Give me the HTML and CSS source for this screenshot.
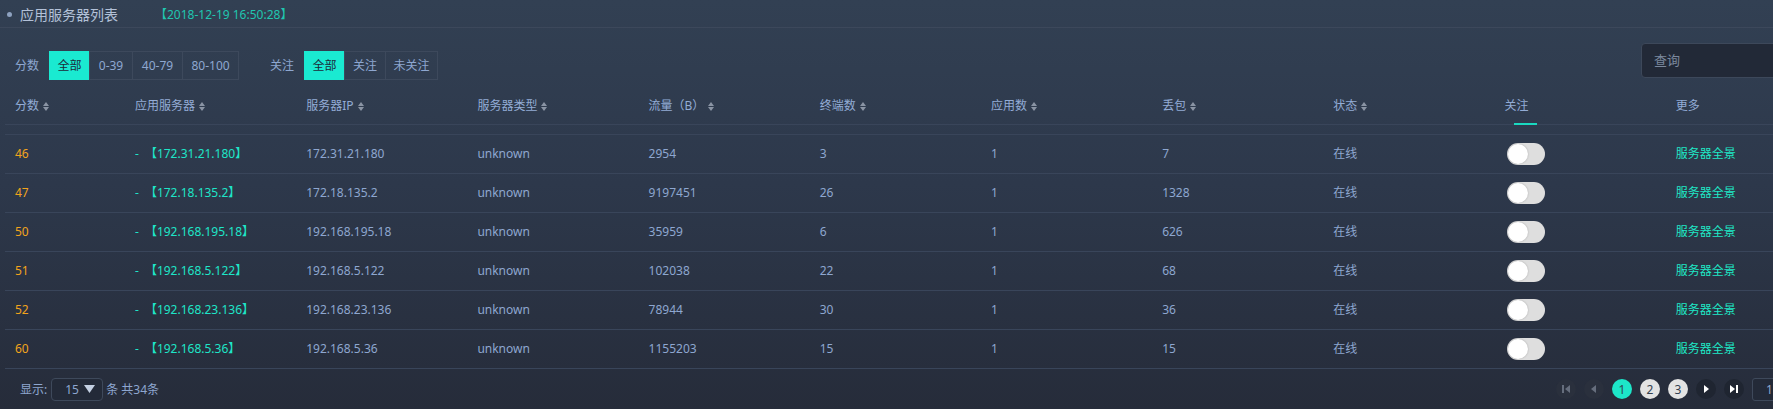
FILE: index.html
```html
<!DOCTYPE html>
<html lang="zh-CN">
<head>
<meta charset="utf-8">
<title>应用服务器列表</title>
<link rel="stylesheet" href="styles.css">
</head>
<body>
<div class="page">
  <div class="titlebar">
    <span class="dot"></span>
    <span class="title">应用服务器列表</span>
    <span class="stamp">【2018-12-19 16:50:28】</span>
  </div>

  <div class="toolbar">
    <div class="filter">
      <span class="flabel">分数</span>
      <div class="btn-group">
        <span class="btn active w40">全部</span>
        <span class="btn w43">0-39</span>
        <span class="btn w50">40-79</span>
        <span class="btn w57 last">80-100</span>
      </div>
    </div>
    <div class="filter second">
      <span class="flabel">关注</span>
      <div class="btn-group">
        <span class="btn active w40">全部</span>
        <span class="btn w41">关注</span>
        <span class="btn w53 last">未关注</span>
      </div>
    </div>
    <div class="search">查询</div>
  </div>

  <div class="grid">
    <div class="row head">
      <div class="cell">分数<svg class="sort" width="6" height="9" viewBox="0 0 6 9"><polygon points="0,4 3,0 6,4"/><polygon points="0,5 6,5 3,9"/></svg></div>
      <div class="cell">应用服务器<svg class="sort" width="6" height="9" viewBox="0 0 6 9"><polygon points="0,4 3,0 6,4"/><polygon points="0,5 6,5 3,9"/></svg></div>
      <div class="cell">服务器IP<svg class="sort" width="6" height="9" viewBox="0 0 6 9"><polygon points="0,4 3,0 6,4"/><polygon points="0,5 6,5 3,9"/></svg></div>
      <div class="cell">服务器类型<svg class="sort" width="6" height="9" viewBox="0 0 6 9"><polygon points="0,4 3,0 6,4"/><polygon points="0,5 6,5 3,9"/></svg></div>
      <div class="cell">流量（B）<svg class="sort" width="6" height="9" viewBox="0 0 6 9"><polygon points="0,4 3,0 6,4"/><polygon points="0,5 6,5 3,9"/></svg></div>
      <div class="cell">终端数<svg class="sort" width="6" height="9" viewBox="0 0 6 9"><polygon points="0,4 3,0 6,4"/><polygon points="0,5 6,5 3,9"/></svg></div>
      <div class="cell">应用数<svg class="sort" width="6" height="9" viewBox="0 0 6 9"><polygon points="0,4 3,0 6,4"/><polygon points="0,5 6,5 3,9"/></svg></div>
      <div class="cell">丢包<svg class="sort" width="6" height="9" viewBox="0 0 6 9"><polygon points="0,4 3,0 6,4"/><polygon points="0,5 6,5 3,9"/></svg></div>
      <div class="cell">状态<svg class="sort" width="6" height="9" viewBox="0 0 6 9"><polygon points="0,4 3,0 6,4"/><polygon points="0,5 6,5 3,9"/></svg></div>
      <div class="cell marked">关注</div>
      <div class="cell">更多</div>
    </div>
    <div class="spacer"></div>

    <div class="row">
      <div class="cell score">46</div>
      <div class="cell server"><span class="dash">-</span>【172.31.21.180】</div>
      <div class="cell">172.31.21.180</div>
      <div class="cell">unknown</div>
      <div class="cell">2954</div>
      <div class="cell">3</div>
      <div class="cell">1</div>
      <div class="cell">7</div>
      <div class="cell">在线</div>
      <div class="cell"><span class="toggle"><span class="knob"></span></span></div>
      <div class="cell link">服务器全景</div>
    </div>
    <div class="row">
      <div class="cell score">47</div>
      <div class="cell server"><span class="dash">-</span>【172.18.135.2】</div>
      <div class="cell">172.18.135.2</div>
      <div class="cell">unknown</div>
      <div class="cell">9197451</div>
      <div class="cell">26</div>
      <div class="cell">1</div>
      <div class="cell">1328</div>
      <div class="cell">在线</div>
      <div class="cell"><span class="toggle"><span class="knob"></span></span></div>
      <div class="cell link">服务器全景</div>
    </div>
    <div class="row">
      <div class="cell score">50</div>
      <div class="cell server"><span class="dash">-</span>【192.168.195.18】</div>
      <div class="cell">192.168.195.18</div>
      <div class="cell">unknown</div>
      <div class="cell">35959</div>
      <div class="cell">6</div>
      <div class="cell">1</div>
      <div class="cell">626</div>
      <div class="cell">在线</div>
      <div class="cell"><span class="toggle"><span class="knob"></span></span></div>
      <div class="cell link">服务器全景</div>
    </div>
    <div class="row">
      <div class="cell score">51</div>
      <div class="cell server"><span class="dash">-</span>【192.168.5.122】</div>
      <div class="cell">192.168.5.122</div>
      <div class="cell">unknown</div>
      <div class="cell">102038</div>
      <div class="cell">22</div>
      <div class="cell">1</div>
      <div class="cell">68</div>
      <div class="cell">在线</div>
      <div class="cell"><span class="toggle"><span class="knob"></span></span></div>
      <div class="cell link">服务器全景</div>
    </div>
    <div class="row">
      <div class="cell score">52</div>
      <div class="cell server"><span class="dash">-</span>【192.168.23.136】</div>
      <div class="cell">192.168.23.136</div>
      <div class="cell">unknown</div>
      <div class="cell">78944</div>
      <div class="cell">30</div>
      <div class="cell">1</div>
      <div class="cell">36</div>
      <div class="cell">在线</div>
      <div class="cell"><span class="toggle"><span class="knob"></span></span></div>
      <div class="cell link">服务器全景</div>
    </div>
    <div class="row">
      <div class="cell score">60</div>
      <div class="cell server"><span class="dash">-</span>【192.168.5.36】</div>
      <div class="cell">192.168.5.36</div>
      <div class="cell">unknown</div>
      <div class="cell">1155203</div>
      <div class="cell">15</div>
      <div class="cell">1</div>
      <div class="cell">15</div>
      <div class="cell">在线</div>
      <div class="cell"><span class="toggle"><span class="knob"></span></span></div>
      <div class="cell link">服务器全景</div>
    </div>
  </div>

  <div class="footer">
    <span class="show">显示:</span>
    <span class="select"><span class="sel-val">15</span><svg class="caret" width="11" height="8" viewBox="0 0 11 8"><polygon points="0,0 11,0 5.5,8"/></svg></span>
    <span class="total">条 共34条</span>
    <div class="pager">
      <span class="pg dim"><svg width="20" height="20" viewBox="0 0 20 20"><rect x="6" y="6" width="2" height="8"/><polygon points="14,6 14,14 9,10"/></svg></span>
      <span class="pg dim"><svg width="20" height="20" viewBox="0 0 20 20"><polygon points="12,6 12,14 7,10"/></svg></span>
      <span class="pg num cur">1</span>
      <span class="pg num">2</span>
      <span class="pg num">3</span>
      <span class="pg nav"><svg width="20" height="20" viewBox="0 0 20 20"><polygon points="8,6 8,14 13,10"/></svg></span>
      <span class="pg nav"><svg width="20" height="20" viewBox="0 0 20 20"><polygon points="6,6 6,14 11,10"/><rect x="12" y="6" width="2" height="8"/></svg></span>
      <span class="jump">1</span>
    </div>
  </div>
</div>
</body>
</html>
```
FILE: styles.css
```css
* { box-sizing: border-box; }
html, body { margin: 0; padding: 0; }
body {
  width: 1773px;
  height: 409px;
  overflow: hidden;
  background: linear-gradient(180deg, #324053 0%, #2d384b 45%, #262c3a 100%);
  font-family: "Noto Sans", "Noto Sans CJK SC", sans-serif;
  font-size: 12px;
  color: #8ea7d0;
}
.page { width: 1840px; }

/* title bar */
.titlebar {
  height: 28px;
  border-bottom: 1px solid #3c485b;
  display: flex;
  align-items: center;
  padding-left: 7px;
  padding-top: 2px;
}
.dot {
  width: 5px; height: 5px;
  border-radius: 50%;
  background: #8ea2c0;
  margin-right: 8px;
}
.title { font-size: 14px; color: #b3c1d8; line-height: 20px; }
.stamp { margin-left: 37px; color: #20c6b0; font-size: 12px; line-height: 20px; }

/* toolbar */
.toolbar {
  height: 52px;
  display: flex;
  align-items: flex-start;
  padding: 15px 0 0 15px;
}
.filter { display: flex; align-items: center; margin-top: 8px; }
.filter.second { margin-left: 31px; }
.flabel { margin-right: 10px; color: #8ea7d0; line-height: 29px; }
.btn-group { display: flex; }
.btn {
  height: 29px;
  line-height: 27px;
  text-align: center;
  border: 1px solid #3d495c;
  border-right: none;
  color: #8ea7d0;
}
.btn.last { border-right: 1px solid #3d495c; }
.btn.active { background: #1aead1; border-color: #1aead1; color: #1d2c3a; }
.w40 { width: 40px; }
.w41 { width: 41px; }
.w43 { width: 43px; }
.w50 { width: 50px; }
.w53 { width: 53px; }
.w57 { width: 57px; }
.search {
  margin-left: auto;
  width: 199px;
  height: 35px;
  background: #222937;
  border: 1px solid #3d485a;
  border-radius: 4px;
  padding-left: 12px;
  line-height: 33px;
  font-size: 13px;
  color: #7b889d;
}

/* table */
.grid { margin-top: 8px; margin-left: 5px; width: 1834px; }
.row {
  display: grid;
  grid-template-columns: 120px repeat(10, 171.2px);
  height: 39px;
  align-items: center;
  border-bottom: 1px solid #39455a;
}
.row.head { height: 37px; color: #93acd6; }
.spacer { height: 10px; border-bottom: 1px solid #39455a; }
.cell {
  padding-left: 10px;
  white-space: nowrap;
  display: flex;
  align-items: center;
  line-height: 16px;
}
.head .cell { position: relative; height: 100%; }
.sort { margin-left: 4px; fill: #8a94a4; }
.marked::after {
  content: "";
  position: absolute;
  left: 19px;
  bottom: -1px;
  width: 23px;
  height: 2px;
  background: #1ad9c0;
}
.score { color: #f2a41c; }
.server { color: #1ee5c8; }
.dash { margin-right: 6px; }
.link { color: #1ee8c6; }
.toggle {
  display: inline-block;
  position: relative;
  width: 38px;
  height: 22px;
  border-radius: 11px;
  background: #dedede;
  margin-left: 2px;
}
.knob {
  position: absolute;
  left: 1px; top: 1px;
  width: 20px; height: 20px;
  border-radius: 50%;
  background: #ffffff;
  box-shadow: 0 0 2px rgba(0,0,0,0.25);
}

/* footer */
.footer {
  height: 40px;
  display: flex;
  align-items: center;
  padding-left: 20px;
  padding-right: 38px;
}
.show { color: #8ea7d0; }
.select {
  margin-left: 4px;
  width: 52px;
  height: 23px;
  border: 1px solid #3e495b;
  border-radius: 4px;
  background: #232a38;
  display: flex;
  align-items: center;
  padding-left: 13px;
}
.sel-val { color: #8ea7d0; margin-right: 5px; }
.caret { fill: #c4d0e2; }
.total { margin-left: 3px; color: #8ea7d0; }
.pager { margin-left: auto; display: flex; align-items: center; gap: 8px; }
.pg {
  width: 20px; height: 20px;
  border-radius: 50%;
  display: flex;
  align-items: center;
  justify-content: center;
}
.pg.dim { background: #2a303d; fill: #666e7d; }
.pg.nav { background: #1f2531; fill: #ffffff; }
.pg.num { background: #e3e3e3; color: #33404f; font-size: 12px; }
.pg.num.cur { background: #1de6c9; color: #2a4a55; }
.jump {
  width: 50px;
  height: 23px;
  border: 1px solid #3e495b;
  border-radius: 3px;
  background: #232a38;
  padding-left: 13px;
  line-height: 21px;
  color: #8ea7d0;
}
```
